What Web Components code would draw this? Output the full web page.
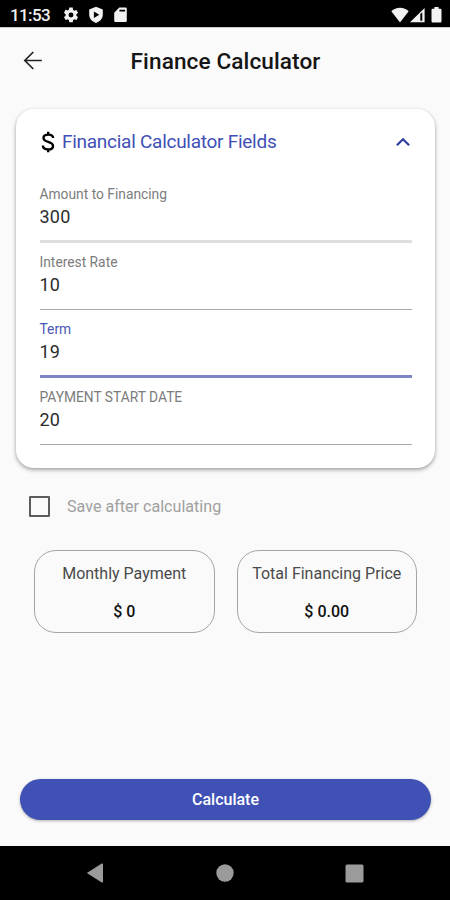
<!DOCTYPE html>
<html lang="en">
<head>
<meta charset="utf-8">
<title>Finance Calculator</title>
<style>
  html, body { margin: 0; height: 100%; }
  body { font-family: Roboto, "Liberation Sans", sans-serif; background: #fafafa; overflow: hidden; }
</style>
</head>
<body>
<finance-screen></finance-screen>

<template id="finance-screen">
  <style>
    :host { display: flex; flex-direction: column; width: 450px; height: 900px; background: #fafafa; color: #151515; }
    main { flex: 1; display: flex; flex-direction: column; }
    fin-card { margin: 15px 15.5px 0; }
    fin-check { margin: 28px 0 0 29px; }
    .results { display: flex; gap: 22px; margin: 34px 33px 0 34px; }
    .results > * { flex: 1; }
    fin-button { margin: auto 19px 26px 20px; }
  </style>
  <status-bar></status-bar>
  <app-header>Finance Calculator</app-header>
  <main>
    <fin-card>
      <span slot="title">Financial Calculator Fields</span>
      <fin-field class="soft" label="Amount to Financing">300</fin-field>
      <fin-field label="Interest Rate">10</fin-field>
      <fin-field class="active" label="Term">19</fin-field>
      <fin-field label="PAYMENT START DATE" style="--label-spacing: 0">20</fin-field>
    </fin-card>
    <fin-check>Save after calculating</fin-check>
    <div class="results">
      <result-box label="Monthly Payment">$ 0</result-box>
      <result-box label="Total Financing Price">$ 0.00</result-box>
    </div>
    <fin-button>Calculate</fin-button>
  </main>
  <nav-bar></nav-bar>
</template>

<template id="status-bar">
  <style>
    :host { display: flex; align-items: center; height: 27px; padding: 2px 8px 0 10px; box-sizing: border-box; background: #000; color: #f2f2f2; }
    .time { font-size: 17px; font-weight: 500; line-height: 20px; width: 52px; letter-spacing: -0.6px; }
    svg { display: block; fill: #f2f2f2; }
    .left, .right { display: flex; align-items: center; }
    .left { gap: 8px; }
    .card { margin-left: 1px; }
    .right { margin-left: auto; gap: 1px; }
    .battery { margin-left: 5px; }
  </style>
  <span class="time">11:53</span>
  <div class="left">
    <svg width="18" height="18" viewBox="0 0 24 24"><path d="M19.14 12.94c.04-.3.06-.61.06-.94s-.02-.64-.07-.94l2.03-1.58a.49.49 0 0 0 .12-.61l-1.92-3.32a.49.49 0 0 0-.59-.22l-2.39.96a7 7 0 0 0-1.62-.94l-.36-2.54A.48.48 0 0 0 13.92 2h-3.84c-.24 0-.43.17-.47.41l-.36 2.54c-.59.24-1.13.57-1.62.94l-2.39-.96a.48.48 0 0 0-.59.22L2.74 8.87c-.12.21-.08.47.12.61l2.03 1.58c-.05.3-.09.63-.09.94s.02.64.07.94l-2.03 1.58a.49.49 0 0 0-.12.61l1.92 3.32c.12.22.37.29.59.22l2.39-.96c.5.38 1.03.7 1.62.94l.36 2.54c.05.24.24.41.48.41h3.84c.24 0 .44-.17.47-.41l.36-2.54a6.8 6.8 0 0 0 1.62-.94l2.39.96c.22.08.47 0 .59-.22l1.92-3.32a.48.48 0 0 0-.12-.61zM12 15.3a3.3 3.3 0 1 1 0-6.6 3.3 3.3 0 0 1 0 6.6z"/></svg>
    <svg width="17" height="18" viewBox="0 0 17 18"><path fill-rule="evenodd" d="M8 .8 14.800 3.600V8.600c0 3.900-2.700 7-6.800 8.400C3.900 15.600 1.200 12.500 1.200 8.600V3.600zM5.900 5.600v6.400L11.300 8.800z"/></svg>
    <svg class="card" width="14" height="16" viewBox="0 0 14 16"><path fill-rule="evenodd" d="M5.300 .6H11.600a1.200 1.200 0 0 1 1.200 1.200V13.800A1.200 1.200 0 0 1 11.600 15H1.400A1.200 1.200 0 0 1 .2 13.800V5.700zM5.400 2.700v1.700h5.700V2.700z"/></svg>
  </div>
  <div class="right">
    <svg width="18" height="16" viewBox="0 0 18 16"><path d="M9 15.500.3 4.300C2.500 2.200 5.600.8 9 .8s6.500 1.400 8.700 3.500z"/></svg>
    <svg width="15" height="16" viewBox="0 0 15 16"><path fill-rule="evenodd" d="M0 15.200 14.600 1v14.200zM10.300 7.100v6.700h2V5.200z"/></svg>
    <svg class="battery" width="11" height="16" viewBox="0 0 11 16"><path d="M3.400 0h4.200v1.700h1.700a1.200 1.200 0 0 1 1.200 1.200V14.300a1.200 1.200 0 0 1-1.200 1.200H1.700A1.200 1.200 0 0 1 .5 14.300V2.900A1.200 1.200 0 0 1 1.700 1.700h1.700z"/></svg>
  </div>
</template>

<template id="app-header">
  <style>
    :host { display: grid; grid-template-columns: 66px 1fr 65px; align-items: center; height: 67px; box-shadow: inset 0 1px 0 #c8c8c8; }
    svg { display: block; margin-left: 23px; }
    h1 { margin: 2px 0 0; font-size: 22.6px; font-weight: 500; line-height: 28px; text-align: center; white-space: nowrap; letter-spacing: 0.1px; }
  </style>
  <svg width="20" height="20" viewBox="0 0 20 20" fill="none" stroke="#222" stroke-width="1.7"><path d="M18.800 9.500H2.200M10.300 1 1.800 9.500l8.500 8.500"/></svg>
  <h1><slot></slot></h1>
</template>

<template id="fin-card">
  <style>
    :host { display: block; height: 359px; box-sizing: border-box; padding: 17px 23px 0 24px; background: #fff; border-radius: 18px; box-shadow: 0 2px 4px rgba(0,0,0,.3), 0 1px 3px rgba(0,0,0,.1); }
    header { display: flex; align-items: center; height: 32px; margin-bottom: 22px; }
    .title { flex: 1; margin-left: 7.5px; font-size: 19px; line-height: 24px; color: #3f4fb5; white-space: nowrap; letter-spacing: -0.27px; }
    svg { display: block; fill: none; }
    .dollar { margin-left: 1px; }
    .chevron { margin-right: 2px; }
  </style>
  <header>
    <svg class="dollar" width="14" height="22" viewBox="0 0 14 22" stroke="#000" stroke-width="2.400"><path d="M12.100 7.100C12.100 4.800 10 3.600 7.300 3.600 4.500 3.600 2.500 4.900 2.500 7c0 2.300 2 3.100 4.700 3.900 2.900.9 4.800 1.700 4.800 4.100 0 2.200-2 3.500-4.800 3.500-3.100 0-5.300-1.400-5.300-3.900M7.200.8v3M7.200 18.200v3"/></svg>
    <span class="title"><slot name="title"></slot></span>
    <svg class="chevron" width="14" height="10" viewBox="0 0 14 10" stroke="#303f9f" stroke-width="2.200"><path d="M.9 8.300 7 2.200l6.100 6.100"/></svg>
  </header>
  <slot></slot>
</template>

<template id="fin-field">
  <style>
    :host { display: flex; flex-direction: column; height: 67.600px; box-sizing: border-box; }
    .label { padding-top: 5px; font-size: 13.800px; line-height: 18px; color: #7c7c7c; letter-spacing: var(--label-spacing, 0); white-space: nowrap; }
    .value { margin-top: 2px; font-size: 18px; line-height: 24px; color: #2c2c2c; letter-spacing: .2px; }
    .line { height: 1px; margin-top: 12px; background: #aaa; }
    :host(.soft) .line { height: 3px; margin-top: 11px; background: #dedede; }
    :host(.active) .line { height: 3px; margin-top: 11px; background: #7f86c6; }
    :host(.active) .label { color: #4b57b5; }
  </style>
  <span class="label"></span>
  <span class="value"><slot></slot></span>
  <div class="line"></div>
</template>

<template id="fin-check">
  <style>
    :host { display: flex; align-items: center; height: 20px; font-size: 16.100px; line-height: 20px; color: #a0a0a0; }
    .box { width: 21px; height: 21px; box-sizing: border-box; border: 2px solid #5c5c5c; border-radius: 1px; margin-right: 17px; }
    .text { padding-top: 2px; }
  </style>
  <span class="box"></span>
  <span class="text"><slot></slot></span>
</template>

<template id="result-box">
  <style>
    :host { display: flex; flex-direction: column; align-items: center; height: 83px; box-sizing: border-box; border: 1px solid #a5a5a5; border-radius: 22px; white-space: nowrap; }
    .label { margin-top: 13px; font-size: 16px; line-height: 20px; color: #4a4a4a; }
    .value { margin-top: 18px; font-size: 16px; line-height: 20px; font-weight: 500; color: #111; }
  </style>
  <span class="label"></span>
  <span class="value"><slot></slot></span>
</template>

<template id="fin-button">
  <style>
    :host { display: flex; align-items: center; justify-content: center; height: 41px; border-radius: 21px; background: #3f51b5; color: #fff; font-size: 16px; font-weight: 500; box-shadow: 0 1px 3px rgba(0,0,0,.3); }
  </style>
  <slot></slot>
</template>

<template id="nav-bar">
  <style>
    :host { display: grid; grid-template-columns: 1fr 72px 1fr; align-items: center; height: 54px; background: #000; }
    svg { display: block; fill: #9b9b9b; }
    .back { justify-self: end; margin-right: 85px; }
    .home { justify-self: center; }
    .recent { margin-left: 84px; }
  </style>
  <svg class="back" width="18" height="20" viewBox="0 0 18 20"><path d="M.8 10 15.800.6Q17 .2 17 1.400V18.600Q17 19.800 15.800 19.400z"/></svg>
  <svg class="home" width="18" height="18" viewBox="0 0 18 18"><circle cx="9" cy="9" r="8.700"/></svg>
  <svg class="recent" width="19" height="19" viewBox="0 0 19 19"><rect x=".5" y=".5" width="18" height="18" rx="1.500"/></svg>
</template>

<script>
// Every element is its template cloned into an open shadow root.
// A "label" attribute, when there is one, fills the .label span.
function define(name) {
  var template = document.getElementById(name);
  window.customElements.define(name, class extends HTMLElement {
    constructor() {
      super();
      this.attachShadow({mode: 'open'});
      this.shadowRoot.appendChild(template.content.cloneNode(true));
    }

    connectedCallback() {
      var label = this.shadowRoot.querySelector('.label');
      if(label) {
        label.textContent = this.getAttribute('label');
      }
    }
  });
}

define('status-bar');
define('app-header');
define('fin-card');
define('fin-field');
define('fin-check');
define('result-box');
define('fin-button');
define('nav-bar');
define('finance-screen');
</script>
</body>
</html>
